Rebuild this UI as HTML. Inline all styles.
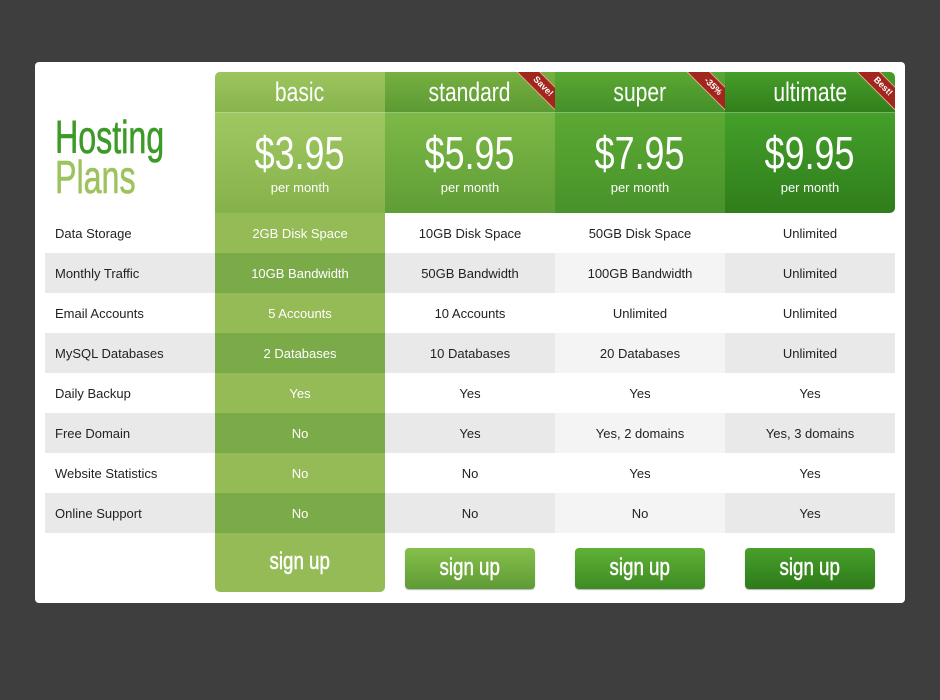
<!DOCTYPE html>
<html><head><style>
*{margin:0;padding:0;box-sizing:border-box}
body{width:940px;height:700px;background:#3e3e3e;font-family:"Liberation Sans",sans-serif;position:relative;overflow:hidden}
.card{position:absolute;left:35px;top:62px;width:870px;height:541px;background:#fff;border-radius:4px}
.ab{position:absolute}
.cond{display:inline-block;transform:scaleX(.78);transform-origin:center;font-family:"Liberation Sans",sans-serif}
.title{position:absolute;left:55px;top:117px;font-size:46px;line-height:40px;font-family:"Liberation Sans",sans-serif;transform:scaleX(.7);transform-origin:left;-webkit-text-stroke:.6px currentColor}
.hd{position:absolute;top:72px;width:170px;height:41px;color:#fff;text-align:center;font-size:27px;line-height:40px;border-bottom:1px solid rgba(255,255,255,.25)}
.pr{position:absolute;top:113px;width:170px;height:100px;color:#fff;text-align:center}
.pr .p{font-size:46px;line-height:46px;margin-top:17px}
.pr .m{font-size:13px;margin-top:4px}
.row{position:absolute;left:45px;width:850px;height:40px;font-size:13px;color:#222;line-height:42px}
.row div{position:absolute;top:0;height:40px;text-align:center;width:170px}
.row .l{left:10px;text-align:left}
.g{background:#e9e9e9}
.btn{position:absolute;top:548px;width:130px;height:41px;border-radius:4px;color:#fff;text-align:center;font-size:24px;line-height:40px;box-shadow:0 1px 1px rgba(0,0,0,.3)}
.btn .cond,.sg .cond{-webkit-text-stroke:.5px #fff}
.rib{position:absolute;top:72px;width:40px;height:40px;overflow:hidden;border-top-right-radius:4px}
.rib span{position:absolute;left:-4px;top:6px;width:64px;height:17px;background:#a3261e;border-top:1px solid #d9b58a;border-bottom:1px solid #d9b58a;transform:rotate(45deg);color:#fff;font-size:9px;line-height:15px;text-align:center;font-weight:bold}
</style></head><body>
<div class="card"></div>
<div class="title"><span style="color:#3c9a27">Hosting</span><br><span style="color:#9cc35d">Plans</span></div>

<div class="ab" style="left:215px;top:72px;width:170px;height:520px;background:#94bb55;border-radius:5px 5px 5px 5px"></div>
<div class="hd" style="left:215px;background:linear-gradient(#9dc55e,#87b44d);border-radius:5px 0 0 0"><span class="cond">basic</span></div>
<div class="hd" style="left:385px;background:linear-gradient(#77b041,#5c9a33)"><span class="cond">standard</span></div>
<div class="hd" style="left:555px;background:linear-gradient(#5aa833,#45902a)"><span class="cond">super</span></div>
<div class="hd" style="left:725px;background:linear-gradient(#469e2a,#317f1c);border-radius:0 5px 0 0"><span class="cond">ultimate</span></div>

<div class="pr" style="left:215px;background:linear-gradient(#a0c862,#85b14b)"><div class="p"><span class="cond">$3.95</span></div><div class="m">per month</div></div>
<div class="pr" style="left:385px;background:linear-gradient(#7db947,#5f9d36)"><div class="p"><span class="cond">$5.95</span></div><div class="m">per month</div></div>
<div class="pr" style="left:555px;background:linear-gradient(#5ca934,#48932a)"><div class="p"><span class="cond">$7.95</span></div><div class="m">per month</div></div>
<div class="pr" style="left:725px;background:linear-gradient(#44a02a,#2f7d1b);border-radius:0 0 5px 0"><div class="p"><span class="cond">$9.95</span></div><div class="m">per month</div></div>

<div class="rib" style="left:515px"><span>Save!</span></div>
<div class="rib" style="left:685px"><span>-35%</span></div>
<div class="rib" style="left:855px"><span>Best!</span></div>

<div class="row" style="top:213px"><div class="l">Data Storage</div><div style="left:170px;color:#fff;background:#94bb55">2GB Disk Space</div><div style="left:340px">10GB Disk Space</div><div style="left:510px">50GB Disk Space</div><div style="left:680px">Unlimited</div></div>
<div class="row g" style="top:253px"><div class="l">Monthly Traffic</div><div style="left:170px;color:#fff;background:#7bab48">10GB Bandwidth</div><div style="left:340px">50GB Bandwidth</div><div style="left:510px;background:#f4f4f4">100GB Bandwidth</div><div style="left:680px">Unlimited</div></div>
<div class="row" style="top:293px"><div class="l">Email Accounts</div><div style="left:170px;color:#fff;background:#94bb55">5 Accounts</div><div style="left:340px">10 Accounts</div><div style="left:510px">Unlimited</div><div style="left:680px">Unlimited</div></div>
<div class="row g" style="top:333px"><div class="l">MySQL Databases</div><div style="left:170px;color:#fff;background:#7bab48">2 Databases</div><div style="left:340px">10 Databases</div><div style="left:510px;background:#f4f4f4">20 Databases</div><div style="left:680px">Unlimited</div></div>
<div class="row" style="top:373px"><div class="l">Daily Backup</div><div style="left:170px;color:#fff;background:#94bb55">Yes</div><div style="left:340px">Yes</div><div style="left:510px">Yes</div><div style="left:680px">Yes</div></div>
<div class="row g" style="top:413px"><div class="l">Free Domain</div><div style="left:170px;color:#fff;background:#7bab48">No</div><div style="left:340px">Yes</div><div style="left:510px;background:#f4f4f4">Yes, 2 domains</div><div style="left:680px">Yes, 3 domains</div></div>
<div class="row" style="top:453px"><div class="l">Website Statistics</div><div style="left:170px;color:#fff;background:#94bb55">No</div><div style="left:340px">No</div><div style="left:510px">Yes</div><div style="left:680px">Yes</div></div>
<div class="row g" style="top:493px"><div class="l">Online Support</div><div style="left:170px;color:#fff;background:#7bab48">No</div><div style="left:340px">No</div><div style="left:510px;background:#f4f4f4">No</div><div style="left:680px">Yes</div></div>

<div class="ab sg" style="left:215px;top:543px;width:170px;height:40px;color:#fff;text-align:center;font-size:24px;line-height:38px"><span class="cond">sign up</span></div>
<div class="btn" style="left:405px;background:linear-gradient(#86bf4b,#5e9b34)"><span class="cond">sign up</span></div>
<div class="btn" style="left:575px;background:linear-gradient(#5fb136,#3f8b24)"><span class="cond">sign up</span></div>
<div class="btn" style="left:745px;background:linear-gradient(#48a02b,#2e7a1a)"><span class="cond">sign up</span></div>
</body></html>
